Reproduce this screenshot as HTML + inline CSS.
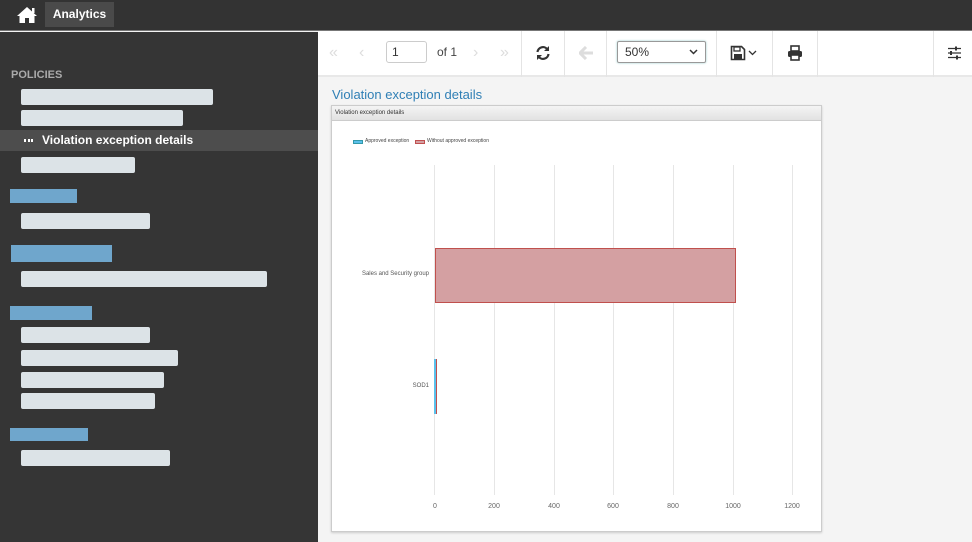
<!DOCTYPE html>
<html><head><style>
*{margin:0;padding:0;box-sizing:border-box}
body{width:972px;height:542px;overflow:hidden;background:#f4f4f4;font-family:"Liberation Sans",sans-serif;position:relative}
.a{position:absolute}
.bar{position:absolute;background:#dce3e7;border-radius:2px;height:16px;left:21px}
.blue{position:absolute;background:#6fa6cc;height:14px;left:10px}
.sep{position:absolute;top:31px;width:1px;height:46px;background:#e4e4e4}
.gl{position:absolute;top:165px;width:1px;height:330px;background:#e6e6e6}
.xl{position:absolute;top:503px;font-size:7px;color:#666;width:30px;text-align:center}
</style></head><body>
<div class="a" style="left:0;top:0;width:972px;height:31px;background:#333;border-bottom:1px solid #777"></div>
<svg class="a" style="left:16px;top:6px" width="22" height="18" viewBox="0 0 22 18"><path d="M11 1 L1 10 L3.5 10 L3.5 17 L9 17 L9 12 L13 12 L13 17 L18.5 17 L18.5 10 L21 10 Z" fill="#fff"/><rect x="16" y="2" width="2.5" height="5" fill="#fff"/></svg>
<div class="a" style="left:45px;top:2px;width:69px;height:25px;background:#4a4a4a;color:#fff;font-size:12px;font-weight:bold;line-height:25px;text-align:center">Analytics</div>
<div class="a" style="left:0;top:32px;width:318px;height:510px;background:#353535"></div>
<div class="a" style="left:11px;top:69px;color:#aaa;font-size:11px;font-weight:bold">POLICIES</div>
<div class="bar" style="top:89px;width:192px"></div>
<div class="bar" style="top:110px;width:162px"></div>
<div class="a" style="left:0;top:130px;width:318px;height:21px;background:#4d4d4d"></div>
<div class="a" style="left:24px;top:139px;width:9px;height:3px;border-left:2px solid #fff;border-right:2px solid #fff"><div style="width:2px;height:3px;background:#fff;margin-left:1.5px"></div></div>
<div class="a" style="left:42px;top:133px;color:#fff;font-size:12px;font-weight:bold">Violation exception details</div>
<div class="bar" style="top:157px;width:114px"></div>
<div class="blue" style="top:189px;width:67px"></div>
<div class="bar" style="top:213px;width:129px"></div>
<div class="blue" style="top:245px;left:11px;width:101px;height:17px"></div>
<div class="bar" style="top:271px;width:246px"></div>
<div class="blue" style="top:306px;width:82px"></div>
<div class="bar" style="top:327px;width:129px"></div>
<div class="bar" style="top:350px;width:157px"></div>
<div class="bar" style="top:372px;width:143px"></div>
<div class="bar" style="top:393px;width:134px"></div>
<div class="blue" style="top:428px;width:78px;height:13px"></div>
<div class="bar" style="top:450px;width:149px"></div>
<!-- toolbar -->
<div class="a" style="left:318px;top:31px;width:654px;height:46px;background:#fff;border-bottom:2px solid #e8e8e8"></div>
<div class="a" style="left:329px;top:44px;color:#ddd;font-size:16px">«</div>
<div class="a" style="left:359px;top:44px;color:#ddd;font-size:16px">‹</div>
<div class="a" style="left:386px;top:41px;width:41px;height:22px;border:1px solid #ccc;border-radius:3px;font-size:12px;padding:3px 5px;color:#333">1</div>
<div class="a" style="left:437px;top:45px;font-size:12px;color:#444">of 1</div>
<div class="a" style="left:473px;top:44px;color:#ddd;font-size:16px">›</div>
<div class="a" style="left:500px;top:44px;color:#ddd;font-size:16px">»</div>
<div class="sep" style="left:521px"></div>
<svg class="a" style="left:535px;top:45px" width="16" height="16" viewBox="0 0 16 16"><path d="M2.5 7A5.5 5.5 0 0 1 12.5 4.5M13.5 9A5.5 5.5 0 0 1 3.5 11.5" stroke="#333" stroke-width="2.2" fill="none"/><path d="M14 1V6H9Z M2 15V10H7Z" fill="#333"/></svg>
<div class="sep" style="left:564px"></div>
<svg class="a" style="left:579px;top:46px" width="15" height="14" viewBox="0 0 15 14"><path d="M7 1L1 7L7 13M1 7H14" stroke="#ddd" stroke-width="3" fill="none"/></svg>
<div class="sep" style="left:606px"></div>
<div class="a" style="left:617px;top:41px;width:89px;height:22px;border:1px solid #999;border-radius:2px;font-size:12px;padding:3px 7px;color:#333;box-shadow:0 0 2px #9cc">50%<svg style="position:absolute;right:7px;top:7px" width="9" height="6" viewBox="0 0 9 6"><path d="M1 1L4.5 4.5L8 1" stroke="#333" stroke-width="1.5" fill="none"/></svg></div>
<div class="sep" style="left:716px"></div>
<svg class="a" style="left:730px;top:45px" width="30" height="16" viewBox="0 0 30 16"><path d="M1.5 1.5H11.5L14.5 4.5V14.5H1.5Z" stroke="#333" stroke-width="1.6" fill="none"/><rect x="4" y="2" width="6" height="4" fill="none" stroke="#333" stroke-width="1.3"/><rect x="4" y="9" width="8" height="5" fill="#333"/><path d="M19 6L22.5 9.5L26 6" stroke="#333" stroke-width="1.3" fill="none"/></svg>
<div class="sep" style="left:772px"></div>
<svg class="a" style="left:787px;top:45px" width="16" height="16" viewBox="0 0 16 16"><rect x="4" y="1" width="8" height="5" fill="none" stroke="#333" stroke-width="1.6"/><rect x="1" y="6" width="14" height="6" rx="1.5" fill="#333"/><rect x="4" y="10" width="8" height="5" fill="#fff" stroke="#333" stroke-width="1.6"/></svg>
<div class="sep" style="left:817px"></div>
<div class="sep" style="left:933px"></div>
<svg class="a" style="left:947px;top:46px" width="15" height="14" viewBox="0 0 15 14"><path d="M1 2.5H14M1 7H14M1 11.5H14" stroke="#333" stroke-width="1.3"/><rect x="8" y="0.5" width="2" height="4" fill="#333"/><rect x="3" y="5" width="2" height="4" fill="#333"/><rect x="9" y="9.5" width="2" height="4" fill="#333"/></svg>
<div class="a" style="left:332px;top:87px;color:#2f7fb5;font-size:13px">Violation exception details</div>
<!-- chart card -->
<div class="a" style="left:331px;top:105px;width:491px;height:427px;background:#fff;border:1px solid #ccc;box-shadow:0 1px 2px #ccc"></div>
<div class="a" style="left:332px;top:106px;width:489px;height:15px;background:linear-gradient(#f4f4f4,#e2e2e2);border-bottom:1px solid #ccc;font-size:6px;color:#333;padding:4px 3px">Violation exception details</div>
<div class="a" style="left:353px;top:140px;width:10px;height:4px;background:#5bc0eb;border:1px solid #39a"></div>
<div class="a" style="left:365px;top:138px;font-size:5px;color:#444">Approved exception</div>
<div class="a" style="left:415px;top:140px;width:10px;height:4px;background:#d4a0a2;border:1px solid #c05050"></div>
<div class="a" style="left:427px;top:138px;font-size:5px;color:#444">Without approved exception</div>
<div class="gl" style="left:434px"></div><div class="gl" style="left:494px"></div><div class="gl" style="left:554px"></div><div class="gl" style="left:613px"></div><div class="gl" style="left:673px"></div><div class="gl" style="left:733px"></div><div class="gl" style="left:792px"></div>
<div class="xl" style="left:420px">0</div><div class="xl" style="left:479px">200</div><div class="xl" style="left:539px">400</div><div class="xl" style="left:598px">600</div><div class="xl" style="left:658px">800</div><div class="xl" style="left:718px">1000</div><div class="xl" style="left:777px">1200</div>
<div class="a" style="left:435px;top:248px;width:301px;height:55px;background:#d4a0a2;border:1px solid #c0504d"></div>
<div class="a" style="left:434px;top:359px;width:2px;height:55px;background:#5bc0eb"></div>
<div class="a" style="left:436px;top:359px;width:1px;height:55px;background:#c0504d"></div>
<div class="a" style="left:340px;top:271px;width:89px;text-align:right;font-size:6px;color:#555">Sales and Security group</div>
<div class="a" style="left:340px;top:383px;width:89px;text-align:right;font-size:6px;color:#555">SOD1</div>
</body></html>
